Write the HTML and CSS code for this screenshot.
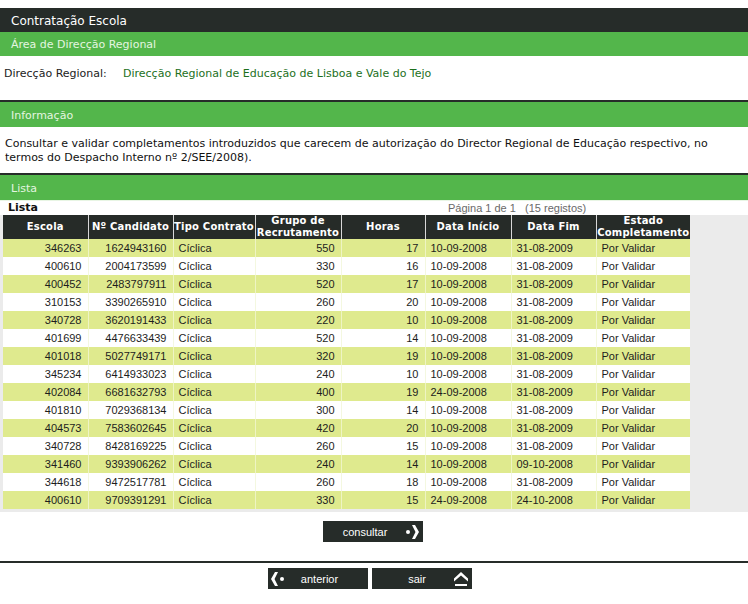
FILE: index.html
```html
<!DOCTYPE html>
<html lang="pt">
<head>
<meta charset="utf-8">
<title>Contratação Escola</title>
<link rel="stylesheet" href="styles.css">
</head>
<body>
<div class="page">
  <div class="titlebar">Contratação Escola</div>
  <div class="section-head">Área de Direcção Regional</div>
  <div class="field-row">
    <span class="label">Direcção Regional:</span>
    <span class="value">Direcção Regional de Educação de Lisboa e Vale do Tejo</span>
  </div>
  <div class="section-head bordered">Informação</div>
  <p class="info">Consultar e validar completamentos introduzidos que carecem de autorização do Director Regional de Educação respectivo, no termos do Despacho Interno nº 2/SEE/2008).</p>
  <div class="section-head bordered">Lista</div>
  <div class="list-meta">
    <span class="list-title">Lista</span>
    <span class="pager">Página 1 de 1&nbsp;&nbsp;&nbsp;(15 registos)</span>
  </div>
  <div class="table-wrap">
    <table class="grid">
      <colgroup>
        <col class="c-escola"><col class="c-cand"><col class="c-tipo"><col class="c-grupo"><col class="c-horas"><col class="c-ini"><col class="c-fim"><col class="c-estado">
      </colgroup>
      <thead>
        <tr><th>Escola</th><th>Nº Candidato</th><th>Tipo Contrato</th><th>Grupo de<br>Recrutamento</th><th>Horas</th><th>Data Início</th><th>Data Fim</th><th>Estado<br>Completamento</th></tr>
      </thead>
      <tbody>
        <tr class="odd"><td class="r">346263</td><td class="r">1624943160</td><td>Cíclica</td><td class="r">550</td><td class="r">17</td><td>10-09-2008</td><td>31-08-2009</td><td>Por Validar</td></tr>
        <tr><td class="r">400610</td><td class="r">2004173599</td><td>Cíclica</td><td class="r">330</td><td class="r">16</td><td>10-09-2008</td><td>31-08-2009</td><td>Por Validar</td></tr>
        <tr class="odd"><td class="r">400452</td><td class="r">2483797911</td><td>Cíclica</td><td class="r">520</td><td class="r">17</td><td>10-09-2008</td><td>31-08-2009</td><td>Por Validar</td></tr>
        <tr><td class="r">310153</td><td class="r">3390265910</td><td>Cíclica</td><td class="r">260</td><td class="r">20</td><td>10-09-2008</td><td>31-08-2009</td><td>Por Validar</td></tr>
        <tr class="odd"><td class="r">340728</td><td class="r">3620191433</td><td>Cíclica</td><td class="r">220</td><td class="r">10</td><td>10-09-2008</td><td>31-08-2009</td><td>Por Validar</td></tr>
        <tr><td class="r">401699</td><td class="r">4476633439</td><td>Cíclica</td><td class="r">520</td><td class="r">14</td><td>10-09-2008</td><td>31-08-2009</td><td>Por Validar</td></tr>
        <tr class="odd"><td class="r">401018</td><td class="r">5027749171</td><td>Cíclica</td><td class="r">320</td><td class="r">19</td><td>10-09-2008</td><td>31-08-2009</td><td>Por Validar</td></tr>
        <tr><td class="r">345234</td><td class="r">6414933023</td><td>Cíclica</td><td class="r">240</td><td class="r">10</td><td>10-09-2008</td><td>31-08-2009</td><td>Por Validar</td></tr>
        <tr class="odd"><td class="r">402084</td><td class="r">6681632793</td><td>Cíclica</td><td class="r">400</td><td class="r">19</td><td>24-09-2008</td><td>31-08-2009</td><td>Por Validar</td></tr>
        <tr><td class="r">401810</td><td class="r">7029368134</td><td>Cíclica</td><td class="r">300</td><td class="r">14</td><td>10-09-2008</td><td>31-08-2009</td><td>Por Validar</td></tr>
        <tr class="odd"><td class="r">404573</td><td class="r">7583602645</td><td>Cíclica</td><td class="r">420</td><td class="r">20</td><td>10-09-2008</td><td>31-08-2009</td><td>Por Validar</td></tr>
        <tr><td class="r">340728</td><td class="r">8428169225</td><td>Cíclica</td><td class="r">260</td><td class="r">15</td><td>10-09-2008</td><td>31-08-2009</td><td>Por Validar</td></tr>
        <tr class="odd"><td class="r">341460</td><td class="r">9393906262</td><td>Cíclica</td><td class="r">240</td><td class="r">14</td><td>10-09-2008</td><td>09-10-2008</td><td>Por Validar</td></tr>
        <tr><td class="r">344618</td><td class="r">9472517781</td><td>Cíclica</td><td class="r">260</td><td class="r">18</td><td>10-09-2008</td><td>31-08-2009</td><td>Por Validar</td></tr>
        <tr class="odd"><td class="r">400610</td><td class="r">9709391291</td><td>Cíclica</td><td class="r">330</td><td class="r">15</td><td>24-09-2008</td><td>24-10-2008</td><td>Por Validar</td></tr>
      </tbody>
    </table>
  </div>
  <div class="actions">
    <button class="btn btn-next" type="button"><span class="btn-label">consultar</span>
      <svg class="ico" width="16" height="14" viewBox="0 0 16 14"><circle cx="5" cy="7" r="2" fill="#fff"/><polygon points="9,0 12,0 16,7 12,14 9,14 12.5,7" fill="#fff"/></svg>
    </button>
  </div>
  <div class="footer">
    <button class="btn btn-prev" type="button">
      <svg class="ico" width="16" height="14" viewBox="0 0 16 14"><polygon points="7,0 4,0 0,7 4,14 7,14 3.5,7" fill="#fff"/><circle cx="11" cy="7" r="2" fill="#fff"/></svg>
      <span class="btn-label">anterior</span>
    </button>
    <button class="btn btn-exit" type="button"><span class="btn-label">sair</span>
      <svg class="ico" width="14" height="16" viewBox="0 0 14 16"><polygon points="0,7.5 7,1 14,7.5 14,10.5 7,4.5 0,10.5" fill="#fff"/><rect x="1" y="13" width="12" height="2" fill="#fff"/></svg>
    </button>
  </div>
</div>
</body>
</html>
```

FILE: styles.css
```css
html, body {
  margin: 0;
  padding: 0;
  background: #fff;
}
body {
  padding-top: 8px;
  font-family: "DejaVu Sans", Verdana, sans-serif;
  font-size: 11px;
  color: #222;
}
.page {
  width: 748px;
}
.titlebar {
  height: 24px;
  line-height: 26px;
  background: #262c29;
  color: #fff;
  font-size: 12px;
  padding-left: 11px;
}
.section-head {
  height: 24px;
  line-height: 26px;
  background: #53b64b;
  color: #e4f5e0;
  font-size: 11px;
  padding-left: 11px;
}
.section-head.bordered {
  border-top: 2px solid #262c29;
  height: 25px;
  line-height: 27px;
}
.field-row {
  height: 44px;
  display: flex;
  align-items: flex-start;
  padding: 11px 0 0 4px;
  box-sizing: border-box;
  line-height: 14px;
}
.label {
  width: 119px;
  color: #222;
}
.value {
  color: #1c6f1c;
}
.info {
  margin: 0;
  height: 46px;
  box-sizing: border-box;
  padding: 10px 5px 0 5px;
  line-height: 14px;
  color: #111;
}
.list-meta {
  height: 15px;
  display: flex;
  align-items: flex-end;
  border-top: 1px solid #e8f5e4;
  box-sizing: border-box;
  line-height: 12px;
  padding-bottom: 1px;
}
.list-title {
  font-weight: bold;
  padding-left: 8px;
  width: 440px;
  color: #111;
}
.pager {
  font-family: "Liberation Sans", Arial, sans-serif;
  color: #6a6a6a;
  font-size: 11px;
}
.table-wrap {
  background: #ebebeb;
  padding: 0 58px 3px 3px;
}
.grid {
  border-collapse: collapse;
  table-layout: fixed;
  width: 687px;
}
.c-escola { width: 85px; }
.c-cand { width: 85px; }
.c-tipo { width: 82px; }
.c-grupo { width: 86px; }
.c-horas { width: 84px; }
.c-ini { width: 86px; }
.c-fim { width: 85px; }
.c-estado { width: 94px; }
.grid th {
  background: #262b28;
  color: #fff;
  font-weight: bold;
  font-size: 10px;
  line-height: 12px;
  height: 24px;
  padding: 0;
  text-align: center;
  border-left: 1px solid #d8d8d8;
  white-space: nowrap;
  letter-spacing: 0.2px;
}
.grid th:first-child { border-left: 0; }
.grid td {
  font-family: "Liberation Sans", Arial, sans-serif;
  font-size: 11px;
  height: 18px;
  padding: 0 5px;
  border-left: 1px solid #f4f8e0;
  color: #1d1d1d;
  white-space: nowrap;
  background: #fff;
}
.grid td:first-child { border-left: 0; }
.grid tr.odd td {
  background: #dfea8e;
  border-left-color: #eef4c4;
}
.grid td.r { text-align: right; padding-right: 6px; }
.actions {
  display: flex;
  justify-content: center;
  padding: 9px 0 19px 0;
  border-bottom: 2px solid #262c29;
}
.btn {
  width: 100px;
  height: 21px;
  background: #262c29;
  color: #fff;
  border: 0;
  padding: 0;
  font-family: "Liberation Sans", Arial, sans-serif;
  font-size: 11px;
  display: flex;
  align-items: center;
  cursor: pointer;
}
.btn-next { margin-left: -2px; }
.btn-next .btn-label { flex: 1; text-align: center; padding-left: 4px; }
.btn-next .ico { margin-right: 4px; }
.btn-prev .ico { margin-left: 3px; }
.btn-prev .btn-label { flex: 1; text-align: center; padding-right: 16px; }
.btn-exit .btn-label { flex: 1; text-align: center; padding-left: 8px; }
.btn-exit .ico { margin-right: 4px; }
.footer {
  display: flex;
  justify-content: center;
  gap: 4px;
  padding-top: 5px;
  padding-right: 8px;
}
```
